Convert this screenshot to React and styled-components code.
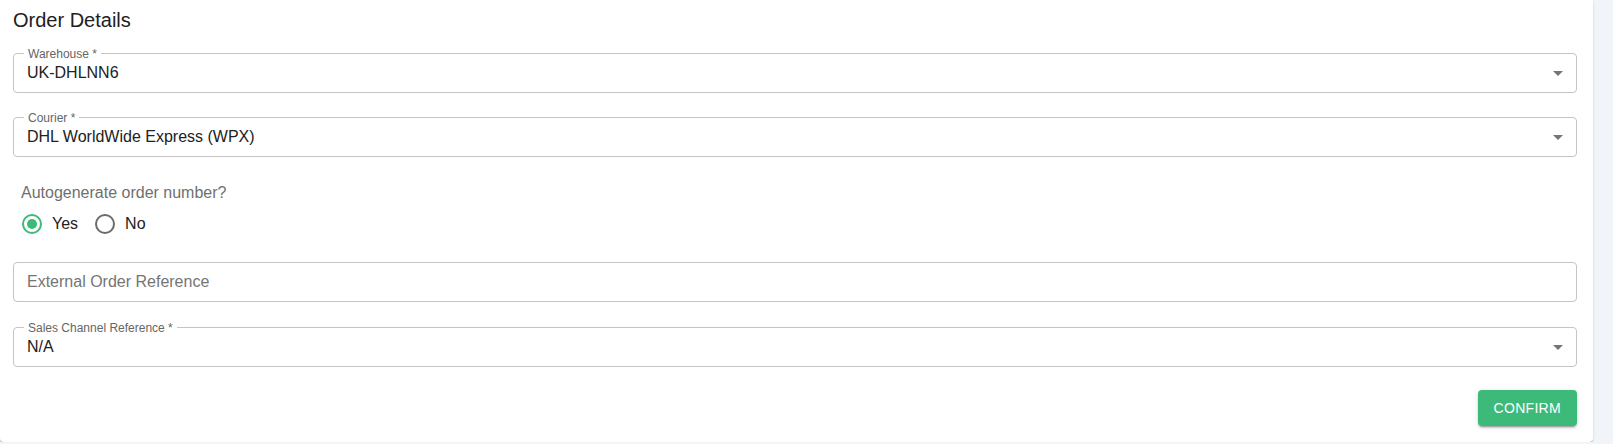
import styled, { createGlobalStyle } from "styled-components";

const GlobalStyle = createGlobalStyle`
html, body {
    margin: 0;
    padding: 0;
    background-color: #f1f4f8;
    font-family: "Liberation Sans", Arial, sans-serif;
}
`;

const ArrowDown = () => (
    <svg width="24" height="24" viewBox="0 0 24 24">
        <path d="M7 10l5 5 5-5z" fill="#757575" />
    </svg>
);

const RadioIcon = ({ checked }) => (
    <svg width="24" height="24" viewBox="0 0 24 24">
        <circle cx="12" cy="12" r="9" fill="none" stroke={checked ? '#3dba7a' : '#6b6b6b'} strokeWidth="2" />
        {checked && <circle cx="12" cy="12" r="5" fill="#3dba7a" />}
    </svg>
);

const Field = ({ label, value, placeholder, select, mt }) => {
    return (
        <FieldBox $mt={mt}>
            {label && <FloatLabel>{label}</FloatLabel>}
            {value ? <Value>{value}</Value> : <Placeholder>{placeholder}</Placeholder>}
            {select && <Arrow><ArrowDown /></Arrow>}
        </FieldBox>
    );
};

const Radio = ({ label, checked }) => (
    <RadioItem>
        <RadioIcon checked={checked} />
        <span>{label}</span>
    </RadioItem>
);

const App = () => {
    return (
        <>
            <GlobalStyle />
            <Card>
                <Title>Order Details</Title>
                <Field mt={21} label="Warehouse *" value="UK-DHLNN6" select />
                <Field mt={24} label="Courier *" value="DHL WorldWide Express (WPX)" select />
                <Question>Autogenerate order number?</Question>
                <RadioRow>
                    <Radio label="Yes" checked />
                    <Radio label="No" />
                </RadioRow>
                <Field mt={26} placeholder="External Order Reference" />
                <Field mt={25} label="Sales Channel Reference *" value="N/A" select />
                <Actions>
                    <ConfirmButton>CONFIRM</ConfirmButton>
                </Actions>
            </Card>
        </>
    );
};

export default App;

const Card = styled.div`
width: 1593px;
box-sizing: border-box;
height: 442px;
padding: 8px 16px 16px 13px;
background-color: #fff;
border-radius: 0 0 4px 4px;
box-shadow: 0 2px 1px -1px rgba(0,0,0,0.2), 0 1px 1px 0 rgba(0,0,0,0.14), 0 1px 3px 0 rgba(0,0,0,0.12);
display: flex;
flex-direction: column;
`;

const Title = styled.h2`
margin: 0;
font-size: 20px;
line-height: 24px;
font-weight: 400;
color: #212121;
`;

const FieldBox = styled.div`
position: relative;
margin-top: ${props => props.$mt}px;
height: 40px;
box-sizing: border-box;
border: 1px solid #c4c4c4;
border-radius: 4px;
padding: 0 40px 0 13px;
display: flex;
align-items: center;
`;

const FloatLabel = styled.span`
position: absolute;
top: -7px;
left: 10px;
padding: 0 4px;
background-color: #fff;
font-size: 12px;
line-height: 14px;
color: #666;
`;

const Value = styled.span`
font-size: 16px;
color: #212121;
`;

const Placeholder = styled.span`
font-size: 16px;
color: #757575;
`;

const Arrow = styled.span`
position: absolute;
right: 6px;
top: 50%;
margin-top: -12px;
display: flex;
`;

const Question = styled.div`
margin: 24px 0 0 8px;
font-size: 16px;
line-height: 24px;
color: #6f6f6f;
`;

const RadioRow = styled.div`
margin: 7px 0 0 7px;
display: flex;
gap: 15px;
`;

const RadioItem = styled.label`
display: flex;
align-items: center;
gap: 8px;
height: 24px;
font-size: 16px;
color: #212121;
`;

const Actions = styled.div`
margin-top: 23px;
display: flex;
justify-content: flex-end;
`;

const ConfirmButton = styled.button`
height: 36px;
padding: 0 16px;
border: none;
border-radius: 4px;
background-color: #3dba7a;
color: #fff;
font-family: inherit;
font-size: 14px;
letter-spacing: 0.3px;
box-shadow: 0 3px 1px -2px rgba(0,0,0,0.2), 0 2px 2px 0 rgba(0,0,0,0.14), 0 1px 5px 0 rgba(0,0,0,0.12);
`;
